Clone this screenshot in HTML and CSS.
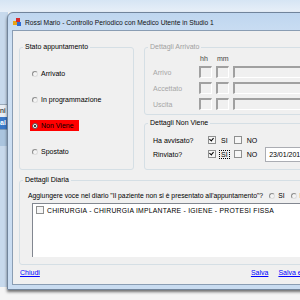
FILE: index.html
```html
<!DOCTYPE html>
<html lang="it">
<head>
    <meta charset="UTF-8">
    <title>Controllo Periodico</title>
    <link rel="stylesheet" href="styles.css">
</head>
<body>
    <div class="desktop">
        <div class="back-window">
            <div class="bw-row bw-light">ni</div>
            <div class="bw-row bw-blue">al</div>
            <div class="bw-row bw-grid"></div>
        </div>

        <div class="window">
            <div class="titlebar">
                <svg class="app-icon" width="9" height="9" viewBox="0 0 9 9">
                    <rect x="0" y="3" width="4" height="4" fill="#e8a317"/>
                    <rect x="3" y="0" width="4" height="4" fill="#d62b2b"/>
                    <rect x="4" y="4" width="4" height="4" fill="#2b6bd6"/>
                </svg>
                <span class="title">Rossi Mario - Controllo Periodico con Medico Utente in Studio 1</span>
            </div>
            <div class="client">
                <div class="top-area">
                    <fieldset class="group stato">
                        <legend>Stato appuntamento</legend>
                        <div class="stato-body">
                            <label class="radio"><span class="rb"></span>Arrivato</label>
                            <label class="radio"><span class="rb"></span>In programmazione</label>
                            <label class="radio selected"><span class="rb on"></span>Non Viene</label>
                            <label class="radio"><span class="rb"></span>Spostato</label>
                        </div>
                    </fieldset>

                    <div class="right-col">
                        <fieldset class="group arrivato disabled">
                            <legend>Dettagli Arrivato</legend>
                            <div class="time-grid">
                                <span></span><span class="hdr">hh</span><span class="hdr">mm</span><span></span>
                                <span class="lbl">Arrivo</span><span class="tb"></span><span class="tb"></span><span class="tb wide"></span>
                                <span class="lbl">Accettato</span><span class="tb"></span><span class="tb"></span><span class="tb wide"></span>
                                <span class="lbl">Uscita</span><span class="tb"></span><span class="tb"></span><span class="tb wide"></span>
                            </div>
                        </fieldset>

                        <fieldset class="group nonviene">
                            <legend>Dettagli Non Viene</legend>
                            <div class="nv-body">
                                <div class="nv-row">
                                    <span class="nv-lbl">Ha avvisato?</span>
                                    <span class="cb checked"></span><span class="opt">SI</span>
                                    <span class="cb"></span><span class="opt">NO</span>
                                </div>
                                <div class="nv-row">
                                    <span class="nv-lbl">Rinviato?</span>
                                    <span class="cb checked"></span><span class="opt focus">SI</span>
                                    <span class="cb"></span><span class="opt">NO</span>
                                    <span class="datebox">23/01/2012</span>
                                </div>
                            </div>
                        </fieldset>
                    </div>
                </div>

                <fieldset class="group diaria">
                    <legend>Dettagli Diaria</legend>
                    <div class="diaria-body">
                        <div class="question">
                            <span>Aggiungere voce nel diario "Il paziente non si è presentato all'appuntamento"?</span>
                            <span class="rb"></span><span>SI</span>
                            <span class="rb"></span><span>NO</span>
                        </div>
                        <div class="listbox">
                            <div class="item"><span class="cb"></span>CHIRURGIA - CHIRURGIA IMPLANTARE - IGIENE - PROTESI FISSA</div>
                        </div>
                    </div>
                </fieldset>

                <div class="footer">
                    <a href="#">Chiudi</a>
                    <span class="spacer"></span>
                    <a href="#">Salva</a>
                    <a href="#">Salva e chiudi</a>
                </div>
            </div>
        </div>
    </div>
</body>
</html>
```

FILE: styles.css
```css
body {
    margin: 0;
    font-family: "Liberation Sans", Arial, sans-serif;
    font-size: 7px;
    color: #000;
    overflow: hidden;
}
.desktop {
    position: relative;
    width: 300px;
    height: 300px;
    background: linear-gradient(#d6e5f4, #e7eff8 12px, #f4f4f4 12px);
    overflow: hidden;
}
.back-window {
    position: absolute;
    left: 0;
    top: 12px;
    width: 8px;
    height: 275px;
    background: #c7d9ec;
    display: flex;
    flex-direction: column;
    padding-top: 92px;
    box-sizing: border-box;
}
.bw-row {
    height: 12px;
    font-size: 7px;
    overflow: hidden;
    white-space: nowrap;
    line-height: 12px;
}
.bw-light {
    background: #e9eef4;
    border-top: 1px solid #9aa9b8;
}
.bw-blue {
    background: #3a78c8;
    color: #fff;
    font-weight: bold;
}
.bw-grid {
    height: 16px;
    background: #aac4de;
    border-top: 1px solid #7f9ab5;
}

/* finestra */
.window {
    position: absolute;
    left: 7px;
    top: 12px;
    width: 310px;
    height: 278px;
    background: linear-gradient(#bfd6ef, #cfe1f4 30px, #c9dcf1);
    border: 1px solid #71849b;
    border-radius: 6px 6px 0 0;
    box-shadow: 0 2px 3px rgba(0,0,0,0.55);
    box-sizing: border-box;
    display: flex;
    flex-direction: column;
    padding: 0 0 4px 4px;
}
.titlebar {
    height: 17px;
    display: flex;
    align-items: center;
    gap: 3px;
    padding: 1px 0 0 1px;
    box-sizing: border-box;
}
.app-icon {
    flex: none;
}
.title {
    font-size: 6.7px;
    white-space: nowrap;
    color: #111;
}
.client {
    flex: 1;
    background: #f0f0f0;
    border: 1px solid #8a9db3;
    border-right: none;
    padding: 12px 0 0 6px;
    display: flex;
    flex-direction: column;
}

/* gruppi */
.group {
    margin: 0;
    border: 1px solid #d5dfe5;
    border-radius: 3px;
    padding: 0;
    min-width: 0;
    box-sizing: border-box;
}
.group legend {
    padding: 0 2px;
    margin-left: 3px;
    font-size: 7px;
    line-height: 8px;
}
.group.disabled legend {
    color: #a0a0a0;
}
.top-area {
    display: flex;
    gap: 10px;
    height: 127px;
}
.stato {
    flex: none;
    width: 115px;
}
.stato-body {
    display: flex;
    flex-direction: column;
    padding: 17px 0 0 12px;
    gap: 15px;
}
.radio {
    display: flex;
    align-items: center;
    gap: 3px;
    height: 11px;
    width: max-content;
}
.radio.selected {
    background: #ff0000;
    margin-left: -2px;
    padding-left: 2px;
    padding-right: 5px;
}
.rb {
    display: inline-block;
    width: 6px;
    height: 6px;
    border-radius: 50%;
    border: 1px solid #8e8f8f;
    border-right-color: #ddd;
    border-bottom-color: #ddd;
    background: #f4f4f4;
    box-sizing: border-box;
    position: relative;
    flex: none;
}
.rb.on {
    background: #fff;
    border-color: #555;
}
.rb.on::after {
    content: "";
    position: absolute;
    left: 1px;
    top: 1px;
    width: 2px;
    height: 2px;
    border-radius: 50%;
    background: #000;
}
.right-col {
    flex: 1;
    min-width: 0;
    display: flex;
    flex-direction: column;
    gap: 4px;
}
.arrivato {
    height: 72px;
}
.time-grid {
    display: grid;
    grid-template-columns: 42px 13px 13px 1fr;
    grid-template-rows: 7px 12px 12px 12px;
    column-gap: 4px;
    row-gap: 4px;
    align-items: center;
    padding: 4px 0 0 8px;
}
.hdr {
    color: #444;
    padding-left: 1px;
}
.lbl {
    color: #a6a6a6;
}
.tb {
    height: 12px;
    box-sizing: border-box;
    border-top: 2px solid #a0a0a0;
    border-left: 2px solid #a0a0a0;
    border-right: 1px solid #fff;
    border-bottom: 1px solid #fff;
    background: #f0f0f0;
}
.nonviene {
    height: 51px;
}
.nv-body {
    padding: 7px 0 0 8px;
    display: flex;
    flex-direction: column;
    gap: 2px;
}
.nv-row {
    display: flex;
    align-items: center;
    height: 12px;
    white-space: nowrap;
}
.nv-lbl {
    width: 55px;
    flex: none;
}
.cb {
    display: inline-block;
    width: 6px;
    height: 6px;
    border: 1px solid #8e8f8f;
    background: #f6f6f6;
    margin-right: 4px;
    position: relative;
    flex: none;
}
.cb.checked::after {
    content: "";
    position: absolute;
    left: 1px;
    top: 0;
    width: 2px;
    height: 3px;
    border-right: 1px solid #000;
    border-bottom: 1px solid #000;
    transform: rotate(40deg);
}
.opt {
    margin-right: 5px;
    padding: 0 1px;
}
.opt.focus {
    outline: 1px dotted #000;
}
.datebox {
    margin-left: 2px;
    height: 15px;
    line-height: 13px;
    padding: 0 3px;
    background: #fff;
    border: 1px solid #abadb3;
    box-sizing: border-box;
    flex: none;
}
.diaria {
    margin-top: 6px;
    height: 89px;
}
.diaria-body {
    padding: 8px 0 0 8px;
}
.question {
    white-space: nowrap;
    display: flex;
    align-items: center;
    gap: 3px;
    font-size: 6.8px;
}
.question .rb {
    margin-left: 3px;
}
.listbox {
    margin: 4px 0 0 4px;
    height: 49px;
    background: #fff;
    border-top: 1px solid #828790;
    border-left: 1px solid #828790;
    padding: 2px 3px;
}
.item {
    display: flex;
    align-items: center;
    white-space: nowrap;
    font-size: 6.8px;
    letter-spacing: 0.25px;
}
.item .cb {
    margin-right: 3px;
}
.footer {
    display: flex;
    gap: 10px;
    padding: 4px 0 0 1px;
}
.spacer {
    flex: 1;
}
.footer a {
    color: #0000ff;
    text-decoration: underline;
    font-size: 7px;
}
.footer a:last-child {
    margin-right: -6px;
}
```
